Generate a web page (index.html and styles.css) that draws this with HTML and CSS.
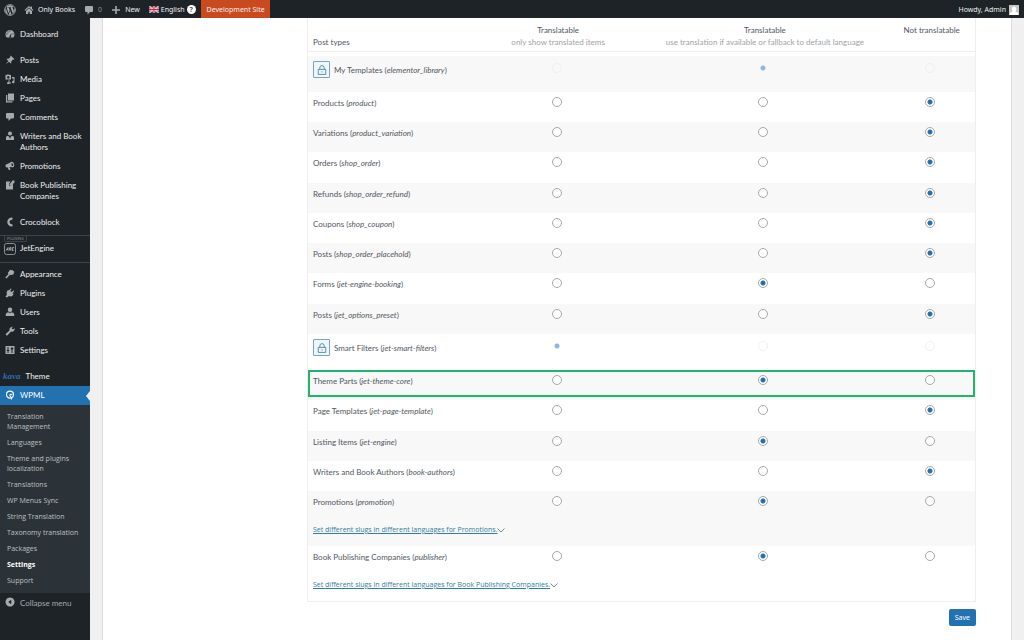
FILE: index.html
```html
<!DOCTYPE html>
<html lang="en">
<head>
<meta charset="utf-8">
<title>WPML Settings - Only Books</title>
<link rel="stylesheet" href="styles.css">
</head>
<body>
<header class="adminbar">
  <a class="bar-item bar-logo" href="#" aria-label="About WordPress"><svg viewBox="0 0 20 20"><circle cx="10" cy="10" r="9" fill="none" stroke="currentColor" stroke-width="1.4"/><path fill="currentColor" d="M2.8 7 6.7 17A7.8 7.8 0 0 1 2.800 7zM4 5.200A7.700 7.700 0 0 1 15.500 4.500c-1.300.1-1.600 1.700-.8 3 .9 1.500 1.100 2.700.6 4.200l-1.100 3.500L11 6.300l1-.1v-.8H7v.8l1.100.1 1.300 3.600-1.900 5.500L4.500 6.300l1-.1v-1zM10.200 11l2.300 6.400a8 8 0 0 1-4.500.1zM17.100 6.500a7.800 7.800 0 0 1-3.300 10.200c2-5.500 3.300-8 3.300-10.200z"/></svg></a>
  <a class="bar-item bar-site" href="#"><svg viewBox="0 0 20 20"><path fill="currentColor" d="M10 2 1 10l1.500 1.500L10 5l7.500 6.500L19 10l-3-2.700V3h-2.500v2zM10 6.700l-6 5.300v6h4.500v-4.500h3V18H16v-6z"/></svg><span>Only Books</span></a>
  <a class="bar-item bar-comments" href="#"><svg viewBox="0 0 20 20"><path fill="currentColor" d="M4 2h12q2 0 2 2v8q0 2-2 2h-4l-5 5v-5H4q-2 0-2-2V4q0-2 2-2z"/></svg><span class="count">0</span></a>
  <a class="bar-item bar-new" href="#"><svg viewBox="0 0 20 20"><path d="M10 2v16M2 10h16" stroke="currentColor" stroke-width="3.200"/></svg><span>New</span></a>
  <a class="bar-item bar-lang" href="#"><svg class="flag" viewBox="0 0 18 12"><path fill="#283c8c" d="M0 0h18v12H0z"/><path stroke="#fff" stroke-width="2.600" d="m0 0 18 12M18 0 0 12"/><path stroke="#d22" stroke-width="1" d="m0 0 18 12M18 0 0 12"/><path stroke="#fff" stroke-width="4" d="M9 0v12M0 6h18"/><path stroke="#d22" stroke-width="2.200" d="M9 0v12M0 6h18"/></svg><span>English</span><span class="help">?</span></a>
  <a class="bar-item bar-dev" href="#">Development Site</a>
  <a class="bar-item bar-user" href="#"><span>Howdy, Admin</span><svg class="avatar" viewBox="0 0 20 20"><path fill="#c6c6c6" d="M0 0h20v20H0z"/><path fill="#fff" d="M10 3c3 0 4.500 2 4.500 4.500S13 12 12.500 12.500c0 1.500 6 1.500 6 5.500v2h-17v-2c0-4 6-4 6-5.500C7 12 5.500 10 5.500 7.500S7 3 10 3z"/></svg></a>
</header>

<div class="layout">
  <nav class="sidebar" aria-label="Main menu">
    <ul class="menu">
      <li><a href="#"><svg viewBox="0 0 20 20"><path fill="currentColor" fill-rule="evenodd" d="M3.500 17A9 9 0 1 1 16.500 17zM9 14.500a1.700 1.700 0 1 0 3-.5l1-6-3.300 5.300zM3 11h2V9H3zM5 7h2V5H5zM9 5h2V3H9zM15 11h2V9h-2z"/></svg>Dashboard</a></li>
      <li class="gap"><a href="#"><svg viewBox="0 0 20 20"><path fill="currentColor" d="m11.500 1 7.500 7.500-1.500 1-1.500-.3-3.300 3.300c.4 1.800 0 3.300-1.200 4.300L8 13.300 1.500 18.500 6.700 12 3.200 8.500c1-1.200 2.500-1.600 4.300-1.200L10.800 4l-.3-1.500z"/></svg>Posts</a></li>
      <li><a href="#"><svg viewBox="0 0 20 20"><path fill="currentColor" fill-rule="evenodd" d="M1 2h2l1-1h4l1 1h3v9H1zm5.500 2a2.500 2.500 0 1 0 .1 0zM14 6h5v10a2.500 2.500 0 1 1-2-2.400V9h-3zM7 12.500h2V17h3v2H9a2.500 2.500 0 1 1-2-3z"/></svg>Media</a></li>
      <li><a href="#"><svg viewBox="0 0 20 20"><path fill="currentColor" d="M6 1h12v14H6zM2 4h2.500v12.500H15V19H2z"/></svg>Pages</a></li>
      <li><a href="#"><svg viewBox="0 0 20 20"><path fill="currentColor" d="M4 2h12q2 0 2 2v7q0 2-2 2h-4l-5 5v-5H4q-2 0-2-2V4q0-2 2-2z"/></svg>Comments</a></li>
      <li><a href="#"><svg viewBox="0 0 20 20"><circle cx="10" cy="5" r="4" fill="currentColor"/><path fill="currentColor" d="M2 18v-5q0-3 4-3.500l3 3v2h2v-2l3-3q4 .5 4 3.500v5z"/></svg>Writers and Book Authors</a></li>
      <li><a href="#"><svg viewBox="0 0 20 20"><path fill="currentColor" fill-rule="evenodd" d="M18 6c1.500 4-.5 7-3 6.500L9 12l2 5-3 1.500-3-6-2 .5C1 12 0 8 2 7l8-3.500C13 0 17 2 18 6zm-5-1c-1 2 .5 5 2 5s2-1.500 1-3.500S14 3.500 13 5z"/></svg>Promotions</a></li>
      <li><a href="#"><svg viewBox="0 0 20 20"><path fill="currentColor" d="M2 3h9L8 8v4l4-1 4-5v13H2z"/><path fill="currentColor" d="M15 1h4v4l-7 6-3 .500.500-3z"/></svg>Book Publishing Companies</a></li>
      <li class="gap"><a href="#"><svg viewBox="0 0 20 20"><path fill="none" stroke="currentColor" stroke-width="4.500" d="M15 3.500C4 2.500 4 17.500 15 16.500"/></svg>Crocoblock</a></li>
      <li class="boxed"><span class="tag">PLUGINS</span><a href="#"><svg class="jet" viewBox="0 0 24 24"><rect x="1" y="1" width="22" height="22" rx="4" fill="none" stroke="currentColor" stroke-width="1.600"/><path fill="none" stroke="currentColor" stroke-width="1.800" d="m4 15 4-6v6M5.500 13H8M10.500 15l1-6h2.500l-.5 3h-2m2 0-.5 3M20 9h-3l-1 6h3m-2.500-3H19"/></svg>JetEngine</a></li>
      <li><a href="#"><svg viewBox="0 0 20 20"><path fill="currentColor" d="m10 1 2 2 2-1.500L19 6l-2 2 1 2-5 2-3-.5L3 19l-2.500-2L7 10 5.500 7.500 8 5z"/></svg>Appearance</a></li>
      <li><a href="#"><svg viewBox="0 0 20 20"><path fill="currentColor" d="m11 1 2 1-2.500 4L13 8l4-3 1.500 1.500-3.500 4 2 1.500c-1 4-5 6-9 4l-3 2.500H2L1 17l3-4C2 9 4 5 6.500 4L8 5z"/></svg>Plugins</a></li>
      <li><a href="#"><svg viewBox="0 0 20 20"><circle cx="10" cy="5.500" r="4.500" fill="currentColor"/><path fill="currentColor" d="M1.500 18v-3q0-4 5-4.500 3.500 2 7 0 5 .5 5 4.500v3z"/></svg>Users</a></li>
      <li><a href="#"><svg viewBox="0 0 20 20"><path fill="currentColor" d="M17 6.500 19 4c1.500 5-3 8.500-7 7l-7 7.500c-2 1.500-4.500-1-3-3L9 9C8 4.500 11.500.500 16 1.500L13.500 4l.5 2z"/></svg>Tools</a></li>
      <li><a href="#"><svg viewBox="0 0 20 20"><path fill="currentColor" fill-rule="evenodd" d="M1 2h18v16H1zm4 2v6H3.500v2H5v4h2v-4h1.500v-2H7V4zm8 0v2h-1.500v3H13v7h2V9h1.500V6H15V4z"/></svg>Settings</a></li>
      <li class="gap"><a class="theme" href="#"><span class="kava">kava</span>Theme</a></li>
      <li class="current"><a href="#"><svg viewBox="0 0 20 20"><circle cx="10" cy="9" r="7" fill="none" stroke="currentColor" stroke-width="2.500"/><path fill="none" stroke="currentColor" stroke-width="2.200" d="M14.500 9c-5-2-6 2-3.500 4s4 3 2 6"/></svg>WPML</a>
        <ul class="submenu">
          <li><a href="#">Translation Management</a></li>
          <li><a href="#">Languages</a></li>
          <li><a href="#">Theme and plugins localization</a></li>
          <li><a href="#">Translations</a></li>
          <li><a href="#">WP Menus Sync</a></li>
          <li><a href="#">String Translation</a></li>
          <li><a href="#">Taxonomy translation</a></li>
          <li><a href="#">Packages</a></li>
          <li><a class="active" href="#">Settings</a></li>
          <li><a href="#">Support</a></li>
        </ul>
      </li>
    </ul>
    <button class="collapse" type="button"><svg viewBox="0 0 20 20"><path fill="currentColor" fill-rule="evenodd" d="M10 1a9 9 0 1 0 .1 0zM12.500 5.500v9L6.500 10z"/></svg>Collapse menu</button>
  </nav>

  <main class="content">
    <form class="panel">
      <table class="types">
        <colgroup><col class="c-name"><col class="c-only"><col class="c-fallback"><col class="c-not"></colgroup>
        <thead>
          <tr>
            <th class="name" scope="col">Post types</th>
            <th scope="col">Translatable<small>only show translated items</small></th>
            <th scope="col">Translatable<small>use translation if available or fallback to default language</small></th>
            <th scope="col">Not translatable</th>
          </tr>
        </thead>
        <tbody>
          <tr class="locked"><td><div class="lock-row"><button class="lock" type="button" aria-label="Unlock My Templates"><svg viewBox="0 0 16 16"><path fill="none" stroke="currentColor" stroke-width="1.500" d="M2 7h12v8H2zM4.500 7V4.500a3.500 3.500 0 0 1 7 0V7M8 10v2"/></svg></button><span>My Templates (<i>elementor_library</i>)</span></div></td><td><input type="radio" name="r1" disabled aria-label="My Templates: only translated"></td><td><input type="radio" name="r1" disabled checked aria-label="My Templates: fallback"></td><td><input type="radio" name="r1" disabled aria-label="My Templates: not translatable"></td></tr>
          <tr><td>Products (<i>product</i>)</td><td><input type="radio" name="r2" aria-label="Products: only translated"></td><td><input type="radio" name="r2" aria-label="Products: fallback"></td><td><input type="radio" name="r2" checked aria-label="Products: not translatable"></td></tr>
          <tr><td>Variations (<i>product_variation</i>)</td><td><input type="radio" name="r3" aria-label="Variations: only translated"></td><td><input type="radio" name="r3" aria-label="Variations: fallback"></td><td><input type="radio" name="r3" checked aria-label="Variations: not translatable"></td></tr>
          <tr><td>Orders (<i>shop_order</i>)</td><td><input type="radio" name="r4" aria-label="Orders: only translated"></td><td><input type="radio" name="r4" aria-label="Orders: fallback"></td><td><input type="radio" name="r4" checked aria-label="Orders: not translatable"></td></tr>
          <tr><td>Refunds (<i>shop_order_refund</i>)</td><td><input type="radio" name="r5" aria-label="Refunds: only translated"></td><td><input type="radio" name="r5" aria-label="Refunds: fallback"></td><td><input type="radio" name="r5" checked aria-label="Refunds: not translatable"></td></tr>
          <tr><td>Coupons (<i>shop_coupon</i>)</td><td><input type="radio" name="r6" aria-label="Coupons: only translated"></td><td><input type="radio" name="r6" aria-label="Coupons: fallback"></td><td><input type="radio" name="r6" checked aria-label="Coupons: not translatable"></td></tr>
          <tr><td>Posts (<i>shop_order_placehold</i>)</td><td><input type="radio" name="r7" aria-label="Order placeholders: only translated"></td><td><input type="radio" name="r7" aria-label="Order placeholders: fallback"></td><td><input type="radio" name="r7" checked aria-label="Order placeholders: not translatable"></td></tr>
          <tr><td>Forms (<i>jet-engine-booking</i>)</td><td><input type="radio" name="r8" aria-label="Forms: only translated"></td><td><input type="radio" name="r8" checked aria-label="Forms: fallback"></td><td><input type="radio" name="r8" aria-label="Forms: not translatable"></td></tr>
          <tr><td>Posts (<i>jet_options_preset</i>)</td><td><input type="radio" name="r9" aria-label="Option presets: only translated"></td><td><input type="radio" name="r9" aria-label="Option presets: fallback"></td><td><input type="radio" name="r9" checked aria-label="Option presets: not translatable"></td></tr>
          <tr class="locked"><td><div class="lock-row"><button class="lock" type="button" aria-label="Unlock Smart Filters"><svg viewBox="0 0 16 16"><path fill="none" stroke="currentColor" stroke-width="1.500" d="M2 7h12v8H2zM4.500 7V4.500a3.500 3.500 0 0 1 7 0V7M8 10v2"/></svg></button><span>Smart Filters (<i>jet-smart-filters</i>)</span></div></td><td><input type="radio" name="r10" disabled checked aria-label="Smart Filters: only translated"></td><td><input type="radio" name="r10" disabled aria-label="Smart Filters: fallback"></td><td><input type="radio" name="r10" disabled aria-label="Smart Filters: not translatable"></td></tr>
          <tr class="highlight"><td>Theme Parts (<i>jet-theme-core</i>)</td><td><input type="radio" name="r11" aria-label="Theme Parts: only translated"></td><td><input type="radio" name="r11" checked aria-label="Theme Parts: fallback"></td><td><input type="radio" name="r11" aria-label="Theme Parts: not translatable"></td></tr>
          <tr><td>Page Templates (<i>jet-page-template</i>)</td><td><input type="radio" name="r12" aria-label="Page Templates: only translated"></td><td><input type="radio" name="r12" aria-label="Page Templates: fallback"></td><td><input type="radio" name="r12" checked aria-label="Page Templates: not translatable"></td></tr>
          <tr><td>Listing Items (<i>jet-engine</i>)</td><td><input type="radio" name="r13" aria-label="Listing Items: only translated"></td><td><input type="radio" name="r13" checked aria-label="Listing Items: fallback"></td><td><input type="radio" name="r13" aria-label="Listing Items: not translatable"></td></tr>
          <tr><td>Writers and Book Authors (<i>book-authors</i>)</td><td><input type="radio" name="r14" aria-label="Writers: only translated"></td><td><input type="radio" name="r14" aria-label="Writers: fallback"></td><td><input type="radio" name="r14" checked aria-label="Writers: not translatable"></td></tr>
          <tr class="slugged"><td>Promotions (<i>promotion</i>)<div class="slug"><a href="#">Set different slugs in different languages for Promotions.</a><svg viewBox="0 0 16 10"><path fill="none" stroke="currentColor" stroke-width="1.800" d="m1 1 7 7 7-7"/></svg></div></td><td><input type="radio" name="r15" aria-label="Promotions: only translated"></td><td><input type="radio" name="r15" checked aria-label="Promotions: fallback"></td><td><input type="radio" name="r15" aria-label="Promotions: not translatable"></td></tr>
          <tr class="slugged"><td>Book Publishing Companies (<i>publisher</i>)<div class="slug"><a href="#">Set different slugs in different languages for Book Publishing Companies.</a><svg viewBox="0 0 16 10"><path fill="none" stroke="currentColor" stroke-width="1.800" d="m1 1 7 7 7-7"/></svg></div></td><td><input type="radio" name="r16" aria-label="Companies: only translated"></td><td><input type="radio" name="r16" checked aria-label="Companies: fallback"></td><td><input type="radio" name="r16" aria-label="Companies: not translatable"></td></tr>
        </tbody>
      </table>
      <div class="actions"><button class="save" type="submit">Save</button></div>
    </form>
  </main>
</div>
</body>
</html>
```
FILE: styles.css
```css
* { box-sizing: border-box; }
body {
  margin: 0;
  min-height: 100vh;
  display: flex;
  flex-direction: column;
  background: #f0f0f1;
  color: #50575e;
  font: 7px/12px "Noto Sans", "Open Sans", sans-serif;
}
a { color: inherit; text-decoration: none; }
ul { list-style: none; margin: 0; padding: 0; }
svg { display: block; flex: none; }
button { font: inherit; cursor: pointer; }

.adminbar {
  display: flex;
  height: 18px;
  padding-right: 5px;
  background: #1d2327;
  color: #f0f0f1;
}
.bar-item { display: flex; align-items: center; gap: 4px; padding-top: 1px; white-space: nowrap; }
.bar-item svg { width: 10px; height: 10px; color: #a7aaad; }
.bar-item.bar-logo { padding-left: 4px; }
.bar-item.bar-logo svg { width: 12px; height: 12px; }
.bar-item.bar-site { padding-left: 8px; }
.bar-item.bar-comments { padding-left: 9px; }
.bar-item.bar-new { padding-left: 9px; }
.bar-item.bar-lang { padding-left: 9px; padding-right: 5px; gap: 2px; }
.bar-item .flag { width: 10px; height: 7px; }
.count { color: #8c8f94; }
.help {
  width: 9px;
  border-radius: 50%;
  background: #fff;
  color: #50575e;
  line-height: 9px;
  text-align: center;
  font-weight: 700;
}
.bar-item.bar-dev { padding-left: 6px; padding-right: 5px; background: #ca4a1f; }
.bar-item.bar-user { margin-left: auto; gap: 3px; }

.layout { flex: 1; display: flex; }
.sidebar {
  width: 90px;
  flex: none;
  background: #1d2327;
  color: #f0f0f1;
  font-family: Lato, "Open Sans", sans-serif;
  font-size: 8px;
}
.menu { padding-top: 7px; }
.menu > li > a {
  display: flex;
  gap: 5px;
  padding: 4px 5px;
  line-height: 11px;
}
.menu svg { width: 10px; height: 10px; color: #a7aaad; }
.menu .gap { margin-top: 7px; }
.menu .boxed {
  position: relative;
  margin: 3px 0 2px;
  padding: 3px 0;
  border: solid #3c4349;
  border-width: 1px 0;
}
.tag {
  position: absolute;
  top: 0;
  left: 4px;
  padding: 0 2px;
  border: 1px solid #3c4349;
  border-top: 0;
  border-radius: 0 0 2px 2px;
  color: #8c8f94;
  font-size: 4px;
  line-height: 5px;
}
.menu .jet { width: 12px; height: 12px; margin: 0 -1px; }
.menu .theme { padding-left: 3px; }
.kava { color: #2f6cb5; font: italic 700 9px/11px "Liberation Serif", serif; }
.current > a { position: relative; background: #2271b1; color: #fff; }
.current > a::after {
  content: "";
  position: absolute;
  right: 0;
  top: 5px;
  border: 5px solid transparent;
  border-left: 0;
  border-right: 4px solid #f0f0f1;
}
.menu .current > a svg { color: #fff; }
.submenu {
  padding: 4px 0;
  background: #2c3338;
  color: #bcc0c3;
  font-family: "Open Sans", sans-serif;
  font-size: 7px;
}
.submenu a { display: block; padding: 3px 7px; line-height: 10px; }
.submenu .active { color: #fff; font-weight: 700; }
.collapse {
  display: flex;
  gap: 5px;
  padding: 4px 5px;
  border: 0;
  background: none;
  color: #a7aaad;
  white-space: nowrap;
}
.collapse svg { width: 10px; height: 10px; }

.content { flex: 1; padding: 0 12px; }
.panel {
  min-height: 100%;
  padding: 0 35px 0 204px;
  border: solid #dcdcde;
  border-width: 0 1px;
  background: #fff;
}
.types {
  width: 100%;
  table-layout: fixed;
  border-collapse: separate;
  border-spacing: 0;
  border: 1px solid #eee;
  border-top: 0;
  font-family: Lato, "Open Sans", sans-serif;
  font-size: 8px;
}
.c-name, .c-only { width: 25%; }
.c-fallback { width: 37%; }
.c-not { width: 13%; }
th { height: 34px; padding: 6px 0 0; border-bottom: 1px solid #eee; font-weight: 400; vertical-align: top; white-space: nowrap; }
th.name { padding: 18px 0 0 5px; text-align: left; }
th small { display: block; color: #a0a3a6; font-size: 8px; }
tbody::before { content: ""; display: block; height: 4px; }
td { padding: 5px 3px 0 0; vertical-align: top; white-space: nowrap; }
td:first-child { padding-left: 5px; }
tbody tr { height: 30px; }
tbody tr:nth-child(4n) { height: 31px; }
tbody tr:nth-child(odd) { background: #f8f8f8; }
tbody .locked { height: 36px; }
tbody tr.slugged { height: 55px; }
.locked input[type="radio"] { margin-top: 2px; }

input[type="radio"] {
  appearance: none;
  display: block;
  width: 10px;
  height: 10px;
  margin: 0 auto;
  border: 1px solid #a5a8ac;
  border-radius: 50%;
  background: #fff;
}
input[type="radio"]:checked { background: radial-gradient(circle, #2271b1 0 2px, #fff 3px); }
input[type="radio"]:disabled { border-color: #f0f0f0; background: none; }
input[type="radio"]:disabled:checked { border-color: transparent; background: radial-gradient(circle, #8fb8dc 0 2px, transparent 3px); }

.lock-row { display: flex; align-items: center; gap: 4px; }
.lock {
  display: grid;
  place-items: center;
  width: 17px;
  height: 17px;
  padding: 0;
  border: 1px solid #74a5c4;
  border-radius: 1px;
  background: #f0f6fa;
  color: #4f8aac;
}
.lock svg { width: 10px; height: 10px; }

.highlight { position: relative; }
.highlight td:first-child::after {
  content: "";
  position: absolute;
  inset: 0 0 3px;
  border: 2px solid #21b56b;
}
.slug { display: flex; align-items: center; margin-top: 16px; color: #2f7d9f; font: 7px/12px "Open Sans", sans-serif; }
.slug a { text-decoration: underline; }
.slug svg { width: 8px; height: 5px; color: #72797f; }

.actions { display: flex; justify-content: flex-end; padding-top: 7px; }
.save {
  height: 17px;
  padding: 0 6px;
  border: 0;
  border-radius: 2px;
  background: #2271b1;
  color: #fff;
}
```
